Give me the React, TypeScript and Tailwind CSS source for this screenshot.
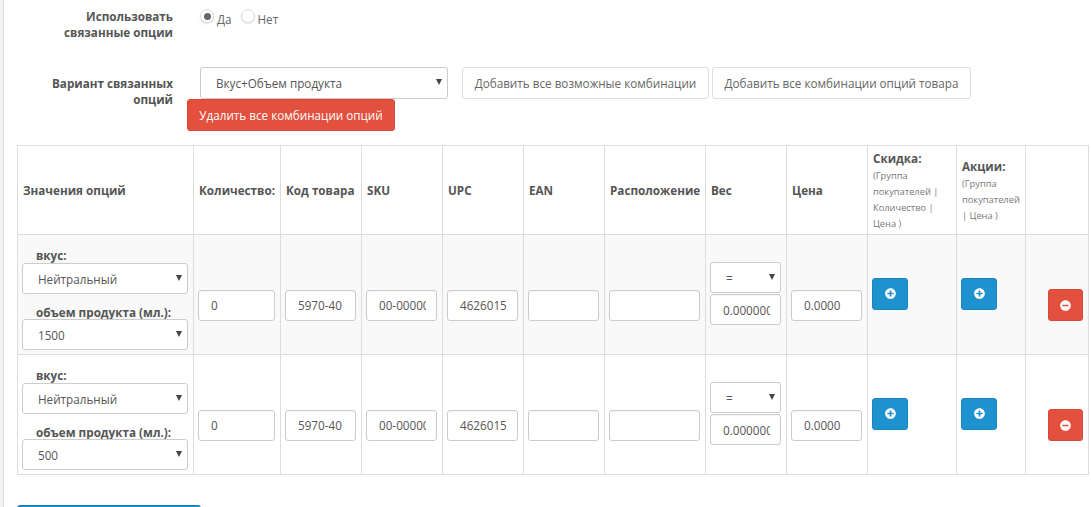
import { FaMinusCircle, FaPlusCircle } from "react-icons/fa"

const headerCell = "border border-[#ddd] px-[5px] pt-[2px] text-left align-middle text-[11.7px] font-bold text-[#555]"
const bodyCell = "border border-[#ddd] pl-[4px] pr-[5px] pt-0 pb-[2px] align-middle"
const fieldInput =
  "h-[31px] w-full rounded-[3px] border border-[#ccc] bg-white pl-3 pr-[10px] text-[11.7px] text-[#555] shadow-[inset_0_1px_1px_rgba(0,0,0,0.04)] outline-none"

function SelectBox({ value, wide, tall }: { value: string; wide?: boolean; tall?: boolean }) {
  return (
    <div className={wide ? "relative w-[248px]" : "relative w-full"}>
      <select
        defaultValue={value}
        className={`${tall ? "h-[32px]" : "h-[31px]"} w-full appearance-none rounded-[3px] border border-[#ccc] bg-white pl-[15px] pr-4 pt-[2px] text-[11.7px] text-[#555] outline-none`}
      >
        <option>{value}</option>
      </select>
      <svg className="pointer-events-none absolute right-[6px] top-[12px] size-[6px] fill-[#444]" viewBox="0 0 6 6">
        <polygon points="0,0 6,0 3,6" />
      </svg>
    </div>
  )
}

function Radio({ checked, label }: { checked?: boolean; label: string }) {
  return (
    <label className="flex items-start gap-[3px]">
      <span className="flex size-[14px] items-center justify-center rounded-full border border-[#ddd] bg-white shadow-[0_1px_2px_rgba(0,0,0,0.12)]">
        {checked && <span className="size-[7px] rounded-full bg-[#666]" />}
      </span>
      <span className="mt-[2px] text-[11.7px] leading-4 text-[#666]">{label}</span>
    </label>
  )
}

function OptionRow({ volume, striped }: { volume: string; striped?: boolean }) {
  return (
    <tr className={striped ? "h-[120px] bg-[#f9f9f9]" : "h-[120px] bg-white"}>
      <td className="border border-[#ddd] pl-[4px] pr-[5px] pb-1 align-bottom">
        <div className="pl-[14px] text-[11.7px] font-bold leading-[15px] text-[#555]">вкус:</div>
        <SelectBox value="Нейтральный" />
        <div className="mt-[12px] pl-[14px] text-[11.7px] font-bold leading-[13px] text-[#555]">объем продукта (мл.):</div>
        <SelectBox value={volume} />
      </td>
      {["0", "5970-40", "00-00000000", "4626015", "", ""].map((v, i) => (
        <td key={i} className={bodyCell}>
          <input readOnly value={v} className={`${fieldInput} mt-[23px] block`} />
        </td>
      ))}
      <td className={bodyCell}>
        <SelectBox value="=" />
        <input readOnly value="0.00000000" className={`${fieldInput} mt-px block`} />
      </td>
      <td className={bodyCell}>
        <input readOnly value="0.0000" className={`${fieldInput} mt-[23px] block`} />
      </td>
      <td className={bodyCell}>
        <button className="flex h-[32px] w-[36px] items-center justify-center rounded-[3px] border border-[#1b85bf] bg-[#1e91cf] text-white">
          <FaPlusCircle className="size-[11px]" />
        </button>
      </td>
      <td className={bodyCell}>
        <button className="flex h-[32px] w-[36px] items-center justify-center rounded-[3px] border border-[#1b85bf] bg-[#1e91cf] text-white">
          <FaPlusCircle className="size-[11px]" />
        </button>
      </td>
      <td className={bodyCell}>
        <button className="ml-auto mt-[23px] flex h-[32px] w-[35px] items-center justify-center rounded-[3px] border border-[#d9483a] bg-[#e3503e] text-white">
          <FaMinusCircle className="size-[11px]" />
        </button>
      </td>
    </tr>
  )
}

export default function App() {
  return (
    <div className="h-[507px] w-[1091px] overflow-hidden bg-[#f2f2f2] pl-[3px] font-['Open_Sans',sans-serif]">
      <div className="h-full border-l border-[#ddd] bg-white pl-[13px]">
        {/* Use linked options */}
        <div className="flex h-[67px] pt-[8px]">
          <div className="w-[156px] text-right text-[11.7px] font-bold leading-4 text-[#555]">
            Использовать
            <br />
            связанные опции
          </div>
          <div className="ml-[27px] mt-[1px] flex gap-[9px]">
            <Radio checked label="Да" />
            <Radio label="Нет" />
          </div>
        </div>

        {/* Linked option variant */}
        <div className="flex">
          <div className="w-[156px] pt-[8px] text-right text-[11.7px] font-bold leading-4 text-[#555]">
            Вариант связанных
            <br />
            опций
          </div>
          <div className="ml-[14px]">
            <div className="ml-[13px] flex">
              <SelectBox value="Вкус+Объем продукта" wide tall />
              <button className="ml-[14px] h-[32px] w-[247px] rounded-[3px] border border-[#ddd] bg-white pt-[2px] text-[11.7px] text-[#666]">
                Добавить все возможные комбинации
              </button>
              <button className="ml-[3px] h-[32px] w-[259px] rounded-[3px] border border-[#ddd] bg-white pt-[2px] text-[11.7px] text-[#666]">
                Добавить все комбинации опций товара
              </button>
            </div>
            <button className="block h-[32px] w-[208px] rounded-[3px] border border-[#d9483a] bg-[#e3503e] pt-[2px] text-[11.7px] text-white">
              Удалить все комбинации опций
            </button>
          </div>
        </div>

        <table className="mt-[14px] w-[1072px] table-fixed border-collapse">
          <colgroup>
            {[176, 87, 81, 81, 81, 81, 101, 81, 81, 89, 69, 63].map((w, i) => (
              <col key={i} style={{ width: w }} />
            ))}
          </colgroup>
          <thead>
            <tr className="h-[89px]">
              <th className={headerCell}>Значения опций</th>
              <th className={`${headerCell} whitespace-nowrap`}>Количество:</th>
              <th className={`${headerCell} whitespace-nowrap`}>Код товара</th>
              <th className={headerCell}>SKU</th>
              <th className={headerCell}>UPC</th>
              <th className={headerCell}>EAN</th>
              <th className={headerCell}>Расположение</th>
              <th className={headerCell}>Вес</th>
              <th className={headerCell}>Цена</th>
              <th className={headerCell}>
                Скидка:
                <div className="text-[9.3px] font-normal leading-4 text-[#777]">(Группа покупателей | Количество | Цена )</div>
              </th>
              <th className={headerCell}>
                Акции:
                <div className="text-[9.3px] font-normal leading-4 text-[#777]">(Группа покупателей | Цена )</div>
              </th>
              <th className={headerCell} />
            </tr>
          </thead>
          <tbody>
            <OptionRow volume="1500" striped />
            <OptionRow volume="500" />
          </tbody>
        </table>

        <button className="mt-[30px] block h-[32px] w-[184px] rounded-[3px] border border-[#1978ab] bg-[#1e91cf]" />
      </div>
    </div>
  )
}
